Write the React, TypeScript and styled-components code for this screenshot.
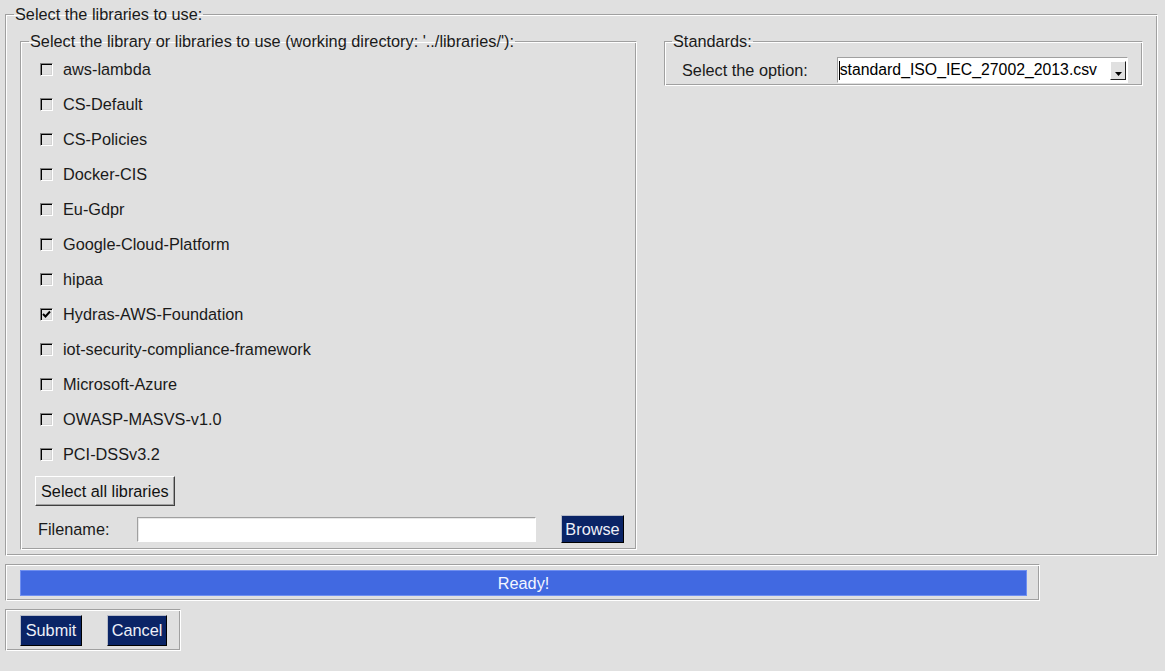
import React from "react";
import styled, { createGlobalStyle } from "styled-components";

const Global = createGlobalStyle`
  html, body { margin: 0; padding: 0; background: #e0e0e0; }
  body { font-family: "Liberation Sans", Arial, sans-serif; font-size: 16.3px; color: #000; }
  * { box-sizing: border-box; }
`;

const Page = styled.div`
  width: 1165px;
  height: 671px;
  padding: 5px 0 0 5px;
  background: #e0e0e0;
  display: flex;
  flex-direction: column;
  align-items: flex-start;
`;

const Group = styled.fieldset<{ $w?: number; $pad?: string }>`
  margin: 0;
  min-width: 0;
  width: ${(p) => (p.$w ? `${p.$w}px` : "auto")};
  padding: ${(p) => p.$pad ?? "0"};
  border: 1px solid;
  border-color: #a0a0a0 #ffffff #ffffff #a0a0a0;
  box-shadow: inset 1px 1px 0 #ffffff, inset -1px -1px 0 #a0a0a0;
`;

const Legend = styled.legend<{ $ml?: number }>`
  margin-left: ${(p) => p.$ml ?? 0}px;
  padding: 0 1px;
  font-size: 16.3px;
  line-height: 18px;
  color: #1a1a1a;
`;

const TopRow = styled.div`
  display: flex;
  align-items: flex-start;
  gap: 27px;
`;

const List = styled.div`
  display: flex;
  flex-direction: column;
`;

const Row = styled.label`
  height: 35px;
  display: flex;
  align-items: center;
  gap: 10px;
  padding-left: 5px;
  color: #1a1a1a;
`;

const Box = styled.span`
  flex: none;
  width: 13px;
  height: 13px;
  display: inline-flex;
  align-items: center;
  justify-content: center;
  border: 1px solid;
  border-color: #808080 #ffffff #ffffff #808080;
  box-shadow: inset 1px 1px 0 #000000, inset -1px -1px 0 #d4d4d4;
  background: #e0e0e0;
`;

const RaisedButton = styled.button`
  font: inherit;
  color: #111;
  background: #e0e0e0;
  height: 30px;
  padding: 0 5px;
  border: 1px solid;
  border-color: #ffffff #404040 #404040 #ffffff;
  box-shadow: inset -1px -1px 0 #a0a0a0;
  align-self: flex-start;
  margin-top: 4px;
`;

const DarkButton = styled.button<{ $w: number; $h: number }>`
  font: inherit;
  color: #eef0f8;
  background: #0a2466;
  width: ${(p) => p.$w}px;
  height: ${(p) => p.$h}px;
  padding: 0;
  border: 1px solid;
  border-color: #b8bcc8 #000000 #000000 #b8bcc8;
`;

const FileRow = styled.div`
  display: flex;
  align-items: center;
  margin-top: 9px;
  padding-left: 3px;
`;

const FileLabel = styled.span`
  width: 99px;
  color: #1a1a1a;
`;

const Entry = styled.div`
  width: 399px;
  height: 25px;
  background: #fff;
  border: 1px solid;
  border-color: #a0a0a0 #ffffff #ffffff #a0a0a0;
  box-shadow: inset 1px 1px 0 #e8e8e8;
  margin-right: 25px;
`;

const OptionRow = styled.div`
  display: flex;
  align-items: center;
`;

const OptionLabel = styled.span`
  width: 155px;
  color: #1a1a1a;
`;

const Combo = styled.div`
  width: 292px;
  height: 26px;
  background: #fff;
  border: 1px solid;
  border-color: #a0a0a0 #ffffff #ffffff #a0a0a0;
  display: flex;
  align-items: center;
  padding: 0 0 0 1px;
`;

const Caret = styled.span`
  width: 1px;
  height: 19px;
  background: #000;
`;

const ComboText = styled.span`
  flex: 1;
  white-space: nowrap;
  font-size: 15.8px;
  color: #000;
`;

const DropBtn = styled.span`
  flex: none;
  width: 16px;
  height: 19px;
  margin-right: 1px;
  background: #e0e0e0;
  border: 1px solid;
  border-color: #ffffff #202020 #202020 #ffffff;
  display: flex;
  align-items: flex-end;
  justify-content: center;
  padding-bottom: 3px;
`;

const ProgressFrame = styled.div`
  margin-top: 8px;
  width: 1035px;
  height: 37px;
  padding: 5px 12px 5px 14px;
  border: 1px solid;
  border-color: #a0a0a0 #ffffff #ffffff #a0a0a0;
  box-shadow: inset 1px 1px 0 #ffffff, inset -1px -1px 0 #a0a0a0;
`;

const Bar = styled.div`
  height: 26px;
  background: #4169e1;
  border: 1px solid #6f8ff0;
  color: #f4f6ff;
  display: flex;
  align-items: center;
  justify-content: center;
`;

const ButtonFrame = styled.div`
  margin-top: 8px;
  width: 176px;
  height: 42px;
  padding: 5px 0 0 14px;
  display: flex;
  align-items: flex-start;
  gap: 25px;
  border: 1px solid;
  border-color: #a0a0a0 #ffffff #ffffff #a0a0a0;
  box-shadow: inset 1px 1px 0 #ffffff, inset -1px -1px 0 #a0a0a0;
`;

const libs = [
  "aws-lambda",
  "CS-Default",
  "CS-Policies",
  "Docker-CIS",
  "Eu-Gdpr",
  "Google-Cloud-Platform",
  "hipaa",
  "Hydras-AWS-Foundation",
  "iot-security-compliance-framework",
  "Microsoft-Azure",
  "OWASP-MASVS-v1.0",
  "PCI-DSSv3.2",
];

const Check = ({ on }: { on: boolean }) => (
  <Box>
    {on && (
      <svg width="9" height="9" viewBox="0 0 9 9">
        <path d="M1 4 L3.5 6.5 L8 1.5" stroke="#000" strokeWidth="2" fill="none" />
      </svg>
    )}
  </Box>
);

export default function App() {
  return (
    <>
      <Global />
      <Page>
        <Group $w={1153} $pad="9px 14px 5px 14px">
          <Legend $ml={-6}>Select the libraries to use:</Legend>
          <TopRow>
            <Group $w={617} $pad="2px 10px 6px 14px">
              <Legend $ml={-6}>Select the library or libraries to use (working directory: '../libraries/'):</Legend>
              <List>
                {libs.map((l) => (
                  <Row key={l}>
                    <Check on={l === "Hydras-AWS-Foundation"} />
                    {l}
                  </Row>
                ))}
                <RaisedButton>Select all libraries</RaisedButton>
                <FileRow>
                  <FileLabel>Filename:</FileLabel>
                  <Entry />
                  <DarkButton $w={63} $h={28}>Browse</DarkButton>
                </FileRow>
              </List>
            </Group>
            <Group $w={479} $pad="7px 14px 2px 17px">
              <Legend $ml={-10}>Standards:</Legend>
              <OptionRow>
                <OptionLabel>Select the option:</OptionLabel>
                <Combo>
                  <Caret />
                  <ComboText>standard_ISO_IEC_27002_2013.csv</ComboText>
                  <DropBtn>
                    <svg width="7" height="4" viewBox="0 0 7 4">
                      <path d="M0 0 L7 0 L3.5 4 Z" fill="#000" />
                    </svg>
                  </DropBtn>
                </Combo>
              </OptionRow>
            </Group>
          </TopRow>
        </Group>
        <ProgressFrame>
          <Bar>Ready!</Bar>
        </ProgressFrame>
        <ButtonFrame>
          <DarkButton $w={62} $h={31}>Submit</DarkButton>
          <DarkButton $w={60} $h={31}>Cancel</DarkButton>
        </ButtonFrame>
      </Page>
    </>
  );
}
